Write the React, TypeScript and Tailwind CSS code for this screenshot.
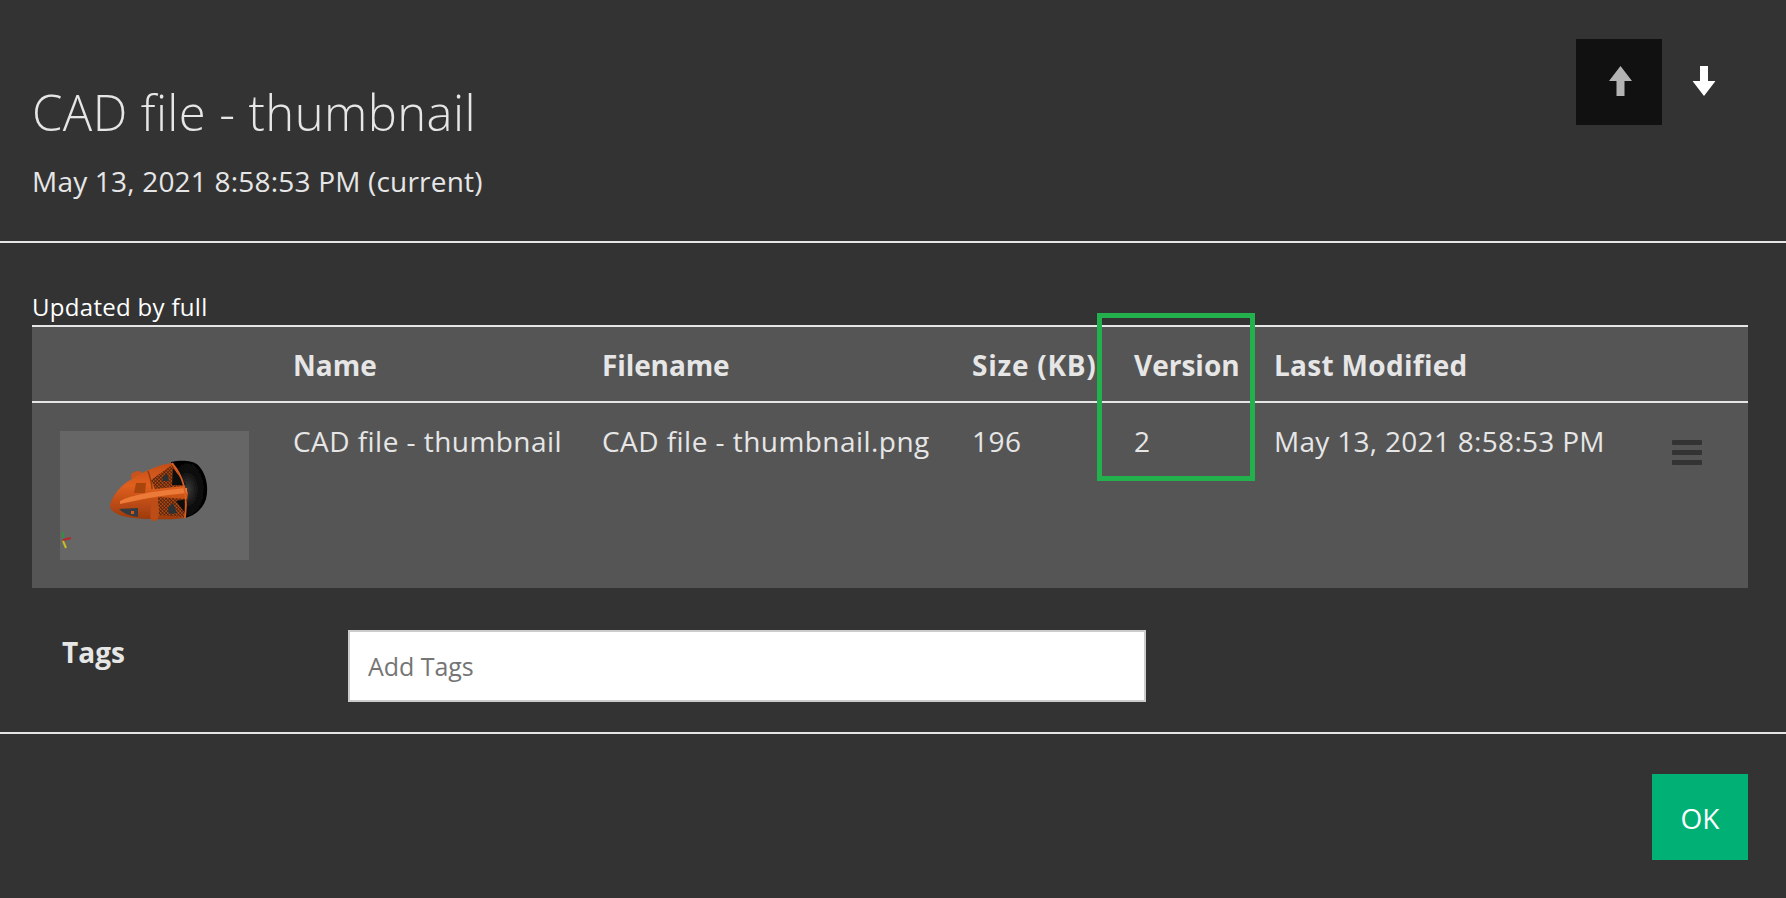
const font = "font-['Open_Sans','Noto_Sans',sans-serif]";

function Thumbnail() {
  return (
    <svg width="189" height="129" viewBox="0 0 189 129" className="block">
      <defs>
        <linearGradient id="body" x1="0" y1="0" x2="0" y2="1">
          <stop offset="0" stopColor="#c24e18" />
          <stop offset="0.4" stopColor="#e05f1e" />
          <stop offset="1" stopColor="#9c3a0e" />
        </linearGradient>
        <radialGradient id="dome" cx="0.45" cy="0.5" r="0.6">
          <stop offset="0" stopColor="#3a3a3a" />
          <stop offset="0.55" stopColor="#0c0c0c" />
          <stop offset="1" stopColor="#000000" />
        </radialGradient>
        <pattern id="mesh" width="2.5" height="2.5" patternUnits="userSpaceOnUse" patternTransform="rotate(45)">
          <rect width="2.5" height="2.5" fill="#b04814" />
          <path d="M0 0H2.5M0 0V2.5" stroke="#3a1a0c" strokeWidth="1.1" />
        </pattern>
        <filter id="soft"><feGaussianBlur stdDeviation="0.45" /></filter>
      </defs>
      <rect width="189" height="129" fill="#666666" />
      <g filter="url(#soft)">
        {/* dome */}
        <path d="M111 31 C120 29 132 29 138 34 C146 42 149 56 146 68 C143 78 134 85 125 87 Z" fill="url(#dome)" />
        {/* nub on top */}
        <path d="M71 47 C70 43 74 40 78 40 C82 40 83 43 82 46 L76 50 Z" fill="#c9521a" />
        {/* hull */}
        <path d="M50 74 C52 66 60 54 72 48 C84 40 100 33 113 32 L128 62 L125 87 C112 89 100 88 92 88 C78 88 62 87 54 81 C51 79 50 77 50 74 Z" fill="url(#body)" />
        {/* upper mesh and opening */}
        <path d="M91 49 L105 39 L112 34 L124 55 L95 58 Z" fill="url(#mesh)" />
        <path d="M113 37 L126 54 L112 54 Z" fill="#0c0c0c" />
        <path d="M103 46 L107 42 L109 50 L102 50 Z" fill="#2a3236" />
        {/* lower mesh and opening */}
        <path d="M98 66 L127 68 L124 86 L98 84 Z" fill="url(#mesh)" />
        <path d="M116 70 L127 68 L125 82 Z" fill="#0c0c0c" />
        <path d="M108 77 L113 72 L117 82 L109 83 Z" fill="#2a3236" />
        {/* side band and rim */}
        <path d="M60 70 C72 64 92 60 127 57 L127 62 C102 64 78 69 60 73 Z" fill="#ec7a38" />
        <path d="M88 40 C90 46 92 52 92 58" fill="none" stroke="#8f3a0e" strokeWidth="1.4" />
        <path d="M112 32 C122 44 128 58 125 87" fill="none" stroke="#d85f22" strokeWidth="1.8" />
        {/* collar */}
        <path d="M92 69 C97 68 99 72 99 79 C99 86 98 90 94 90 C90 90 90 85 91 78 Z" fill="#bd4d16" />
        {/* panels on the nose */}
        <path d="M76 52 L86 52 L85 62 L74 62 Z" fill="#a8440f" />
        <path d="M59 78 L78 77 L78 86 C70 85 64 83 59 78 Z" fill="#343a40" />
        <path d="M71 80 L74 80 L74 83 L71 83 Z" fill="#d9591c" />
      </g>
      <path d="M3 101 L3 107" stroke="#1fa32f" strokeWidth="1.5" />
      <path d="M3 109 L11 107" stroke="#b52a26" strokeWidth="2" />
      <path d="M3 110 L6 117" stroke="#c9bd1d" strokeWidth="2" />
    </svg>
  );
}

function HamburgerIcon() {
  return (
    <div className="flex w-[30px] flex-col gap-[5px]">
      <div className="h-[5px] rounded-[1px] bg-[#333333]" />
      <div className="h-[5px] rounded-[1px] bg-[#333333]" />
      <div className="h-[5px] rounded-[1px] bg-[#333333]" />
    </div>
  );
}

export default function App() {
  return (
    <div className={`${font} relative flex h-[898px] w-[1786px] flex-col overflow-hidden bg-[#333333] text-[#e6e6e6]`}>
      {/* Header */}
      <div className="relative h-[243px] shrink-0 border-b-2 border-[#e6e6e6]">
        <h1 className="absolute left-[32px] top-[80px] text-[49px] font-light leading-[64px] tracking-[0.4px]">
          CAD file - thumbnail
        </h1>
        <p className="absolute left-[32px] top-[161px] text-[28px] leading-[40px] tracking-[0.2px]">
          May 13, 2021 8:58:53 PM (current)
        </p>
        <div className="absolute left-[1576px] top-[39px] flex">
          <button className="flex h-[86px] w-[86px] items-center justify-center bg-[#111111]">
            <svg width="23" height="30" viewBox="0 0 23 30" className="translate-x-[1px] translate-y-[-1px]">
              <path d="M11.5 0 L23 15 L15.5 15 L15.5 30 L7.5 30 L7.5 15 L0 15 Z" fill="#b3b3b3" />
            </svg>
          </button>
          <button className="flex h-[86px] w-[86px] items-center justify-center">
            <svg width="23" height="30" viewBox="0 0 23 30" className="translate-x-[-1.5px] translate-y-[-1px]">
              <path d="M7.5 0 L15.5 0 L15.5 15 L23 15 L11.5 30 L0 15 L7.5 15 Z" fill="#ffffff" />
            </svg>
          </button>
        </div>
      </div>

      {/* Body */}
      <div className="flex flex-col pl-[32px] pr-[38px]">
        <p className="mt-[48px] h-[34px] text-[24px] leading-[32px] tracking-[0.3px] text-white">Updated by full</p>
        <div className="flex h-[78px] items-center border-y-2 border-[#e6e6e6] bg-[#555555] pt-[1px] text-[28px] font-bold">
          <div className="w-[261px] shrink-0" />
          <div className="w-[309px] shrink-0">Name</div>
          <div className="w-[370px] shrink-0 tracking-[-0.1px]">Filename</div>
          <div className="w-[162px] shrink-0 whitespace-nowrap tracking-[0.75px]">Size (KB)</div>
          <div className="w-[140px] shrink-0">Version</div>
          <div className="grow tracking-[0.3px]">Last Modified</div>
        </div>
        <div className="flex h-[185px] bg-[#555555] text-[28px] tracking-[0.45px]">
          <div className="w-[261px] shrink-0 pl-[28px] pt-[28px]">
            <Thumbnail />
          </div>
          <div className="w-[309px] shrink-0 whitespace-nowrap pt-[17px]">CAD file - thumbnail</div>
          <div className="w-[370px] shrink-0 whitespace-nowrap pt-[17px]">CAD file - thumbnail.png</div>
          <div className="w-[162px] shrink-0 pt-[17px]">196</div>
          <div className="w-[140px] shrink-0 pt-[17px]">2</div>
          <div className="w-[398px] shrink-0 whitespace-nowrap pt-[17px] tracking-[0.3px]">May 13, 2021 8:58:53 PM</div>
          <div className="pt-[37px]">
            <HamburgerIcon />
          </div>
        </div>
        {/* Tags */}
        <div className="flex h-[144px] items-start pl-[30px] pt-[42px]">
          <div className="mt-[3px] w-[286px] shrink-0 text-[28px] font-bold leading-[38px]">Tags</div>
          <input
            placeholder="Add Tags"
            className="h-[72px] w-[798px] border-2 border-[#cccccc] bg-white px-[18px] text-[25px] tracking-[-0.05px] text-[#333333] outline-none placeholder:text-[#757575]"
          />
        </div>
      </div>

      {/* Footer */}
      <div className="flex grow justify-end border-t-2 border-[#e6e6e6] pr-[38px] pt-[40px]">
        <button className="h-[86px] w-[96px] bg-[#00b074] pt-[2px] text-[28px] text-white">OK</button>
      </div>

      {/* Annotation box around the Version column */}
      <div className="pointer-events-none absolute left-[1097px] top-[313px] h-[168px] w-[158px] border-[5px] border-[#22b14c]" />
    </div>
  );
}
